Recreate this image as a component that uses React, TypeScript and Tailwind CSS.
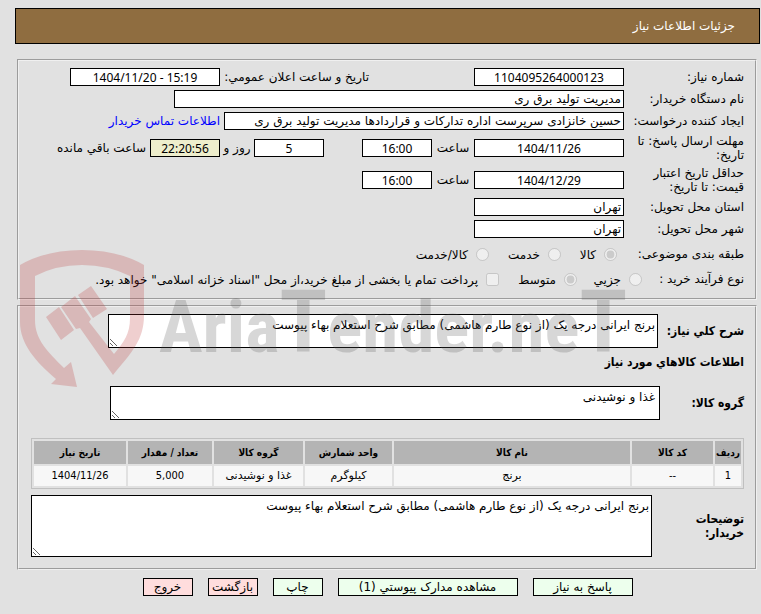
import React from "react";

const box = "h-[18px] border border-black bg-white px-0.5 text-[12px] leading-4";
const num = "text-center font-['Noto_Sans','DejaVu_Sans',sans-serif]";
const narrow = "font-['DejaVu_Sans_Condensed','DejaVu_Sans',sans-serif]";

const items = [
    {row: "1", code: "--", name: "برنج", unit: "کیلوگرم", group: "غذا و نوشیدنی", count: "5,000", date: "1404/11/26"},
];

function Row({label, id, children}) {
    return (
        <div className="flex items-center">
            <label htmlFor={id} className="w-[120px] shrink-0 leading-[14px]">{label}</label>
            {children}
        </div>
    );
}

function Watermark() {
    return (
        <svg className="pointer-events-none absolute left-5 top-[250px] h-[140px] w-[620px]" viewBox="0 0 620 140"
             aria-hidden="true" opacity="0.23">
            <g fill="#bb3434">
                <path
                    d="M0 15Q26 0 62 0T124 15V65C124 90 112 102 93 125L60 78L56 79L41 57L55 46L71 69L69 72L94 104C104 92 110 84 110 68V26Q88 15 62 15T15 26V70C15 90 28 102 44 118L51 112L57 137L31 134L36 129C16 112 0 94 0 72Z"/>
                <path d="M58 45L71 36L87 59L73 68ZM26 67L39 57L54 80L41 90Z"/>
            </g>
            <text x="139" y="102" direction="ltr" fill="#575757" fontSize="73" fontWeight="700"
                  fontFamily="'Liberation Sans Narrow','Roboto Condensed','Liberation Sans',sans-serif">
                Aria<tspan fontSize="88">T</tspan>ender.ne<tspan fontSize="88">T</tspan>
            </text>
        </svg>
    );
}

function App() {
    return (
        <div dir="rtl"
             className="relative bg-[#e1e1e1] pt-2 pr-px pb-[18px] pl-[15px] font-['DejaVu_Sans',sans-serif] text-[12px] leading-4 text-black">
            <h1 className="flex h-9 items-center border border-black bg-[#8f6d40] px-6 text-white">
                جزئیات اطلاعات نیاز
            </h1>

            <fieldset
                className="mt-[15px] mr-[3px] ml-0.5 flex flex-col gap-1 border-2 border-[#f0f0f0] pt-[7px] pr-[11px] pb-2.5 pl-3 [border-style:groove]">
                <Row label="شماره نیاز:" id="number">
                    <input id="number" className={`${box} ${num} w-[150px]`} defaultValue="1104095264000123"/>
                    <label htmlFor="announce" className="w-[254px] pr-[105px] whitespace-nowrap">تاریخ و ساعت اعلان عمومي:</label>
                    <input id="announce" dir="ltr" className={`${box} ${num} w-[150px]`}
                           defaultValue="1404/11/20 - 15:19"/>
                </Row>
                <Row label="نام دستگاه خریدار:" id="buyer">
                    <input id="buyer" className={`${box} w-[450px]`} defaultValue="مدیریت تولید برق ری"/>
                </Row>
                <Row label="ایجاد کننده درخواست:" id="creator">
                    <input id="creator" className={`${box} w-[400px]`}
                           defaultValue="حسین خانزادی سرپرست اداره تدارکات و قراردادها مدیریت تولید برق ری"/>
                    <a href="#" className="mr-1 whitespace-nowrap text-[#0000ff]">اطلاعات تماس خریدار</a>
                </Row>
                <Row label={<>مهلت ارسال پاسخ: تا<br/>تاریخ:</>} id="deadline">
                    <input id="deadline" className={`${box} ${num} w-[150px]`} defaultValue="1404/11/26"/>
                    <label htmlFor="deadline-hour" className="w-[42px] text-center">ساعت</label>
                    <input id="deadline-hour" className={`${box} ${num} w-[70px]`} defaultValue="16:00"/>
                    <input id="days" className={`${box} ${num} mr-[38px] w-[70px]`} defaultValue="5"/>
                    <label htmlFor="days" className="w-[34px] text-center">روز و</label>
                    <input id="left" className={`${num} h-[18px] w-[70px] border border-black bg-[#eeeecc] px-0.5`}
                           defaultValue="22:20:56"/>
                    <label htmlFor="left" className="mr-1 whitespace-nowrap">ساعت باقي مانده</label>
                </Row>
                <Row label={<>حداقل تاریخ اعتبار<br/>قیمت: تا تاریخ:</>} id="valid">
                    <input id="valid" className={`${box} ${num} w-[150px]`} defaultValue="1404/12/29"/>
                    <label htmlFor="valid-hour" className="w-[42px] text-center">ساعت</label>
                    <input id="valid-hour" className={`${box} ${num} w-[70px]`} defaultValue="16:00"/>
                </Row>
                <Row label="استان محل تحویل:" id="province">
                    <input id="province" className={`${box} w-[150px]`} defaultValue="تهران"/>
                </Row>
                <Row label="شهر محل تحویل:" id="city">
                    <input id="city" className={`${box} w-[150px]`} defaultValue="تهران"/>
                </Row>

                <div className="flex h-6 items-center" role="radiogroup" aria-label="طبقه بندی موضوعی">
                    <span className="w-[127px]">طبقه بندی موضوعی:</span>
                    <label className="flex w-14 items-center gap-2">
                        <input type="radio" name="subject" disabled defaultChecked/>
                        <span className="pt-0.5">کالا</span>
                    </label>
                    <label className="flex w-[72px] items-center gap-2">
                        <input type="radio" name="subject" disabled/>
                        <span className="pt-0.5">خدمت</span>
                    </label>
                    <label className="flex items-center gap-2">
                        <input type="radio" name="subject" disabled/>
                        <span className="pt-0.5">کالا/خدمت</span>
                    </label>
                </div>
                <div className="flex h-[18px] items-center whitespace-nowrap" role="radiogroup" aria-label="نوع فرآیند خرید">
                    <span className="w-[102px]">نوع فرآیند خرید :</span>
                    <label className="flex w-[65px] items-center gap-2">
                        <input type="radio" name="process" disabled/>
                        <span className="pt-0.5">جزیي</span>
                    </label>
                    <label className="flex w-[78px] items-center gap-2">
                        <input type="radio" name="process" disabled defaultChecked/>
                        <span className="pt-0.5">متوسط</span>
                    </label>
                    <label className="flex items-center gap-2">
                        <input type="checkbox" disabled/>
                        <span className="pt-0.5">پرداخت تمام یا بخشی از مبلغ خرید،از محل "اسناد خزانه اسلامی" خواهد بود.</span>
                    </label>
                </div>
            </fieldset>

            <fieldset
                className="mt-[5px] mr-[3px] ml-0.5 border-2 border-[#f0f0f0] pt-[7px] pr-[11px] pb-[11px] pl-3 [border-style:groove]">
                <div className="flex items-center">
                    <label htmlFor="summary" className={`${narrow} w-[86px] font-bold whitespace-nowrap`}>شرح کلي نیاز:</label>
                    <textarea id="summary" className="h-[34px] w-[550px] border border-black bg-white px-0.5 py-0.5"
                              defaultValue="برنج ایرانی درجه یک (از نوع طارم هاشمی) مطابق شرح استعلام بهاء پیوست"/>
                </div>
                <h2 className={`${narrow} mt-1.5 font-bold`}>اطلاعات کالاهاي مورد نیاز</h2>
                <div className="mt-4 flex items-center">
                    <label htmlFor="group" className={`${narrow} w-[84px] font-bold`}>گروه کالا:</label>
                    <textarea id="group" className="h-[34px] w-[550px] border border-black bg-white px-1 py-0.5"
                              defaultValue="غذا و نوشیدنی"/>
                </div>

                <table className={`${narrow} mt-[18px] w-full table-fixed border-separate border-spacing-0.5 border border-[#c0c0c0] text-center`}>
                    <thead>
                    <tr className="h-[23px] bg-[#b4b4b4] text-[10px] whitespace-nowrap">
                        <th className="w-[26px]">ردیف</th>
                        <th className="w-[81px]">کد کالا</th>
                        <th>نام کالا</th>
                        <th className="w-[87px]">واحد شمارش</th>
                        <th className="w-[89px]">گروه کالا</th>
                        <th className="w-[84px]">تعداد / مقدار</th>
                        <th className="w-[92px]">تاریخ نیاز</th>
                    </tr>
                    </thead>
                    <tbody>
                    {items.map(item => (
                        <tr key={item.row} className="h-5 bg-[#f7f7f7] text-[11px]">
                            <td>{item.row}</td>
                            <td>{item.code}</td>
                            <td className="font-['DejaVu_Sans',sans-serif]">{item.name}</td>
                            <td className="font-['DejaVu_Sans',sans-serif]">{item.unit}</td>
                            <td className="font-['DejaVu_Sans',sans-serif]">{item.group}</td>
                            <td>{item.count}</td>
                            <td>{item.date}</td>
                        </tr>
                    ))}
                    </tbody>
                </table>

                <div className="mt-1.5 flex items-center">
                    <label htmlFor="notes" className={`${narrow} w-[92px] leading-[14px] font-bold`}>توضیحات<br/>خریدار:</label>
                    <textarea id="notes" className="h-[62px] flex-1 border border-black bg-white px-0.5 py-0.5"
                              defaultValue="برنج ایرانی درجه یک (از نوع طارم هاشمی) مطابق شرح استعلام بهاء پیوست"/>
                </div>
            </fieldset>

            <div className="mt-2 flex justify-center gap-[15px] whitespace-nowrap">
                <button type="button" className="h-[18px] w-[100px] border border-black bg-[#edffed]">پاسخ به نیاز</button>
                <button type="button" className="h-[18px] w-[180px] border border-black bg-[#edffed]">مشاهده مدارک پیوستي (1)</button>
                <button type="button" className="h-[18px] w-[50px] border border-black bg-[#edffed]">چاپ</button>
                <button type="button" className="h-[18px] w-[50px] border border-black bg-[#ffdddd]">بازگشت</button>
                <button type="button" className="h-[18px] w-[50px] border border-black bg-[#ffdddd]">خروج</button>
            </div>

            <Watermark/>
        </div>
    );
}

export default App;
